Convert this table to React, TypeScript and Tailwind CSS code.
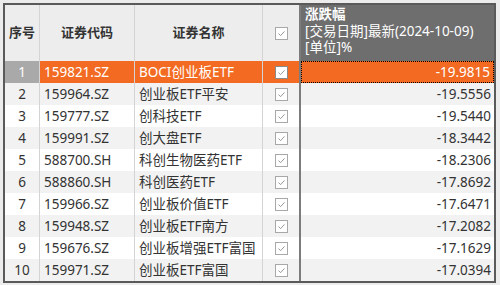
import React from "react";

const rows = [
  ["1", "159821.SZ", "BOCI创业板ETF", "-19.9815"],
  ["2", "159964.SZ", "创业板ETF平安", "-19.5556"],
  ["3", "159777.SZ", "创科技ETF", "-19.5440"],
  ["4", "159991.SZ", "创大盘ETF", "-18.3442"],
  ["5", "588700.SH", "科创生物医药ETF", "-18.2306"],
  ["6", "588860.SH", "科创医药ETF", "-17.8692"],
  ["7", "159966.SZ", "创业板价值ETF", "-17.6471"],
  ["8", "159948.SZ", "创业板ETF南方", "-17.2082"],
  ["9", "159676.SZ", "创业板增强ETF富国", "-17.1629"],
  ["10", "159971.SZ", "创业板ETF富国", "-17.0394"],
];

function Check({ selected }: { selected?: boolean }) {
  return (
    <div
      className={
        "w-[13px] h-[13px] border flex items-center justify-center " +
        (selected ? "border-[#8a8a8a] bg-white" : "border-[#a8a8a8] bg-white")
      }
    >
      <svg width="9" height="9" viewBox="0 0 9 9">
        <path d="M1.5 4.6 L3.6 6.6 L7.5 2.4" fill="none" stroke="#8a8a8a" strokeWidth="0.9" />
      </svg>
    </div>
  );
}

export default function App() {
  const font = { fontFamily: '"Noto Sans", "Noto Sans CJK SC", sans-serif' };
  return (
    <div className="w-[500px] h-[285px] bg-[#ececec] pt-[3px] pl-[3px]" style={font}>
      <div className="w-[493px] h-[280px] border-2 border-[#5a5a5a] bg-white text-[13.5px] text-[#333] overflow-hidden">
        <div className="grid grid-cols-[35px_95px_128px_36px_195px] h-[56px]">
          <div className="bg-[#ededed] border-r border-[#d4d4d4] flex items-center justify-center font-bold text-[13px]">序号</div>
          <div className="bg-[#ededed] border-r border-[#d4d4d4] flex items-center justify-center font-bold text-[13px]">证券代码</div>
          <div className="bg-[#ededed] border-r border-[#d4d4d4] flex items-center justify-center font-bold text-[13px]">证券名称</div>
          <div className="bg-[#ededed] flex items-center justify-center">
            <Check />
          </div>
          <div className="bg-[#6e6e6e] border-l-2 border-[#7c7c7c] text-white pl-[4px] pt-[1px] leading-[16.5px] whitespace-nowrap">
            <div className="font-bold">涨跌幅</div>
            <div>[交易日期]最新(2024-10-09)</div>
            <div>[单位]%</div>
          </div>
        </div>
        {rows.map((r, i) => {
          const sel = i === 0;
          const even = i % 2 === 1;
          const bg = sel ? "bg-[#f36b22] text-white" : even ? "bg-[#f2f2f2]" : "bg-white";
          return (
            <div key={i} className="grid grid-cols-[35px_95px_128px_36px_195px] h-[22px] leading-[22px]">
              <div
                className={
                  "text-center border-r border-[#d4d4d4] " +
                  (sel ? "bg-[#a9a9a9] text-white" : bg)
                }
              >
                {r[0]}
              </div>
              <div className={"pl-[4px] border-r border-[#d4d4d4] " + bg}>{r[1]}</div>
              <div className={"pl-[4px] border-r border-[#d4d4d4] whitespace-nowrap overflow-hidden " + bg}>{r[2]}</div>
              <div className={"flex items-center justify-center " + bg}>
                <Check selected={sel} />
              </div>
              <div className={"border-l-2 border-[#7c7c7c] " + bg}>
                <div
                  className={
                    "h-full text-right pr-[3px] " +
                    (sel ? "border border-dotted border-black leading-[20px]" : "")
                  }
                >
                  {r[3]}
                </div>
              </div>
            </div>
          );
        })}
      </div>
    </div>
  );
}
